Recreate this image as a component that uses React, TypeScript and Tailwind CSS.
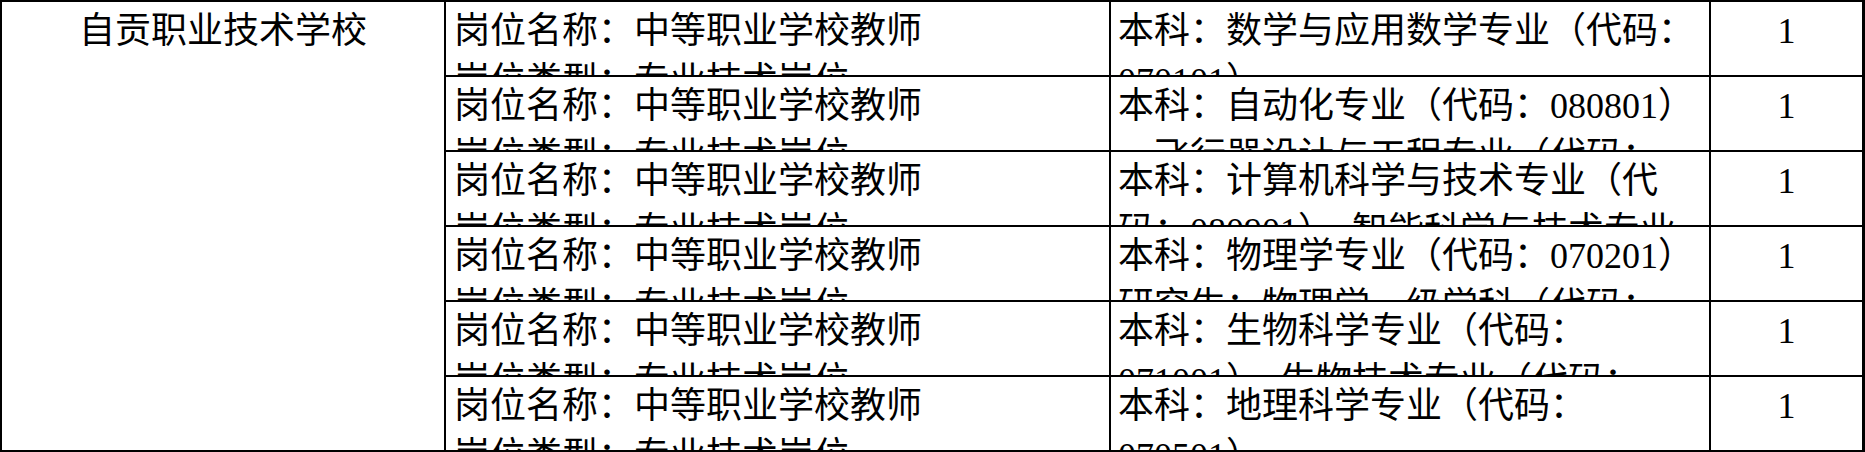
import React from "react";

type Row = {
  post: string[];
  major: string[];
  count: string;
};

const rows: Row[] = [
  {
    post: ["岗位名称：中等职业学校教师", "岗位类型：专业技术岗位"],
    major: ["本科：数学与应用数学专业（代码：", "070101）"],
    count: "1",
  },
  {
    post: ["岗位名称：中等职业学校教师", "岗位类型：专业技术岗位"],
    major: ["本科：自动化专业（代码：080801）", "、飞行器设计与工程专业（代码："],
    count: "1",
  },
  {
    post: ["岗位名称：中等职业学校教师", "岗位类型：专业技术岗位"],
    major: ["本科：计算机科学与技术专业（代", "码：080901）、智能科学与技术专业"],
    count: "1",
  },
  {
    post: ["岗位名称：中等职业学校教师", "岗位类型：专业技术岗位"],
    major: ["本科：物理学专业（代码：070201）", "研究生：物理学一级学科（代码："],
    count: "1",
  },
  {
    post: ["岗位名称：中等职业学校教师", "岗位类型：专业技术岗位"],
    major: ["本科：生物科学专业（代码：", "071001）、生物技术专业（代码："],
    count: "1",
  },
  {
    post: ["岗位名称：中等职业学校教师", "岗位类型：专业技术岗位"],
    major: ["本科：地理科学专业（代码：", "070501）"],
    count: "1",
  },
];

const font = "font-['Liberation_Serif','Noto_Sans_CJK_SC',serif]";

const Lines = ({ lines }: { lines: string[] }) => (
  <>
    {lines.map((line, i) => (
      <div key={i} className="whitespace-nowrap">
        {line}
      </div>
    ))}
  </>
);

const App = () => {
  return (
    <div
      className={`w-[1865px] h-[452px] bg-white text-black ${font} text-[36px] leading-[50px] flex border-t-2 border-l-2 border-r-[3px] border-b-2 border-black overflow-hidden`}
    >
      <div className="w-[444px] shrink-0 border-r-2 border-black pt-1 text-center">
        自贡职业技术学校
      </div>
      <div className="flex-1 flex flex-col">
        {rows.map((row, i) => (
          <div
            key={i}
            className={`flex ${
              i < rows.length - 1 ? "h-[75px] border-b-2" : "flex-1"
            } border-black overflow-hidden`}
          >
            <div className="w-[665px] shrink-0 border-r-2 border-black pl-[8px] pt-1 overflow-hidden">
              <Lines lines={row.post} />
            </div>
            <div className="w-[600px] shrink-0 border-r-2 border-black pl-[7px] pt-1 overflow-hidden">
              <Lines lines={row.major} />
            </div>
            <div className="flex-1 pt-1 text-center">{row.count}</div>
          </div>
        ))}
      </div>
    </div>
  );
};

export default App;
